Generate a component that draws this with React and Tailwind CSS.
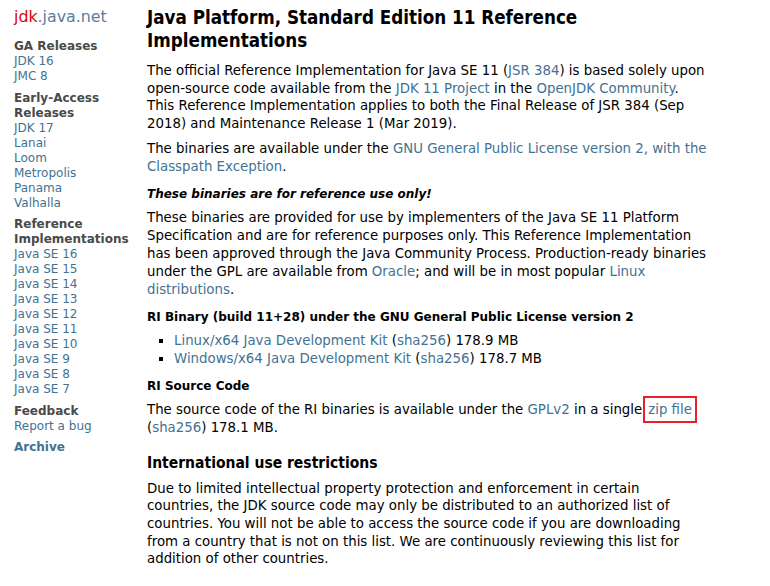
import React from "react";

const link = "text-[#437291]";

function Group({ title, items }) {
  return (
    <div className="mb-[6.5px]">
      <div className="font-bold text-[#4a4a4a]">{title}</div>
      {items.map((it) => (
        <div key={it} className={link}>{it}</div>
      ))}
    </div>
  );
}

export default function App() {
  return (
    <div className="flex bg-white min-h-[586px] font-['DejaVu_Sans',sans-serif] text-black">
      {/* Sidebar */}
      <aside className="w-[147px] shrink-0 pl-[14px] pt-[6px] text-[12px] leading-[15px]">
        <div className="text-[15.8px] leading-[22px] mb-[11px]">
          <span className="text-[#e00000]">jdk</span>
          <span className="text-[#5a7e9a]">.java.net</span>
        </div>
        <Group title="GA Releases" items={["JDK 16", "JMC 8"]} />
        <Group title={<>Early-Access<br />Releases</>} items={["JDK 17", "Lanai", "Loom", "Metropolis", "Panama", "Valhalla"]} />
        <Group
          title={<>Reference<br />Implementations</>}
          items={["Java SE 16", "Java SE 15", "Java SE 14", "Java SE 13", "Java SE 12", "Java SE 11", "Java SE 10", "Java SE 9", "Java SE 8", "Java SE 7"]}
        />
        <Group title="Feedback" items={["Report a bug"]} />
        <div className="font-bold text-[#437291]">Archive</div>
      </aside>

      {/* Main */}
      <main className="w-[560px] pt-[6px] text-[13.33px] leading-[17.7px]">
        <h1 className="font-['DejaVu_Sans_Condensed','DejaVu_Sans',sans-serif] font-stretch-condensed text-[18.67px] leading-[23px] font-bold mb-[10px]">
          Java Platform, Standard Edition 11 Reference Implementations
        </h1>
        <p className="mb-[7px]">
          The official Reference Implementation for Java SE 11 (<span className={link}>JSR 384</span>) is based solely upon
          open-source code available from the <span className={link}>JDK 11 Project</span> in the{" "}
          <span className={link}>OpenJDK Community</span>. This Reference Implementation applies to both the Final Release
          of JSR 384 (Sep 2018) and Maintenance Release 1 (Mar 2019).
        </p>
        <p className="mb-[11px]">
          The binaries are available under the{" "}
          <span className={link}>GNU General Public License version 2, with the Classpath Exception</span>.
        </p>
        <p className="font-bold italic text-[12px] leading-[17px] mb-[6px]">These binaries are for reference use only!</p>
        <p className="mb-[10px] leading-[18px]">
          These binaries are provided for use by implementers of the Java SE 11 Platform Specification and are for
          reference purposes only. This Reference Implementation
          <br />
          has been approved through the Java Community Process. Production-ready binaries under the GPL are available
          from <span className={link}>Oracle</span>; and will be in most popular <span className={link}>Linux distributions</span>.
        </p>
        <h3 className="font-bold text-[12px] leading-[17px] mb-[6px]">
          RI Binary (build 11+28) under the GNU General Public License version 2
        </h3>
        <ul className="list-[square] pl-[27px] mb-[10px] leading-[18px] marker:text-black">
          <li>
            <span className={link}>Linux/x64 Java Development Kit</span> (<span className={link}>sha256</span>) 178.9 MB
          </li>
          <li>
            <span className={link}>Windows/x64 Java Development Kit</span> (<span className={link}>sha256</span>) 178.7 MB
          </li>
        </ul>
        <h3 className="font-bold text-[12px] leading-[17px] mb-[6px]">RI Source Code</h3>
        <p className="mb-[16px]">
          The source code of the RI binaries is available under the <span className={link}>GPLv2</span> in a single
          <span className="outline-2 outline-[#e8202a] px-[3px] py-[4px] ml-[3px]">
            <span className={link}>zip file</span>
          </span>{" "}
          (<span className={link}>sha256</span>) 178.1 MB.
        </p>
        <h2 className="font-['DejaVu_Sans_Condensed','DejaVu_Sans',sans-serif] font-stretch-condensed font-bold text-[15.5px] leading-[20px] mb-[7px]">
          International use restrictions
        </h2>
        <p>
          Due to limited intellectual property protection and enforcement in certain countries, the JDK source code may
          only be distributed to an authorized list of countries. You will not be able to access the source code if you
          are downloading from a country that is not on this list. We are continuously reviewing this list for addition
          of other countries.
        </p>
      </main>
    </div>
  );
}
